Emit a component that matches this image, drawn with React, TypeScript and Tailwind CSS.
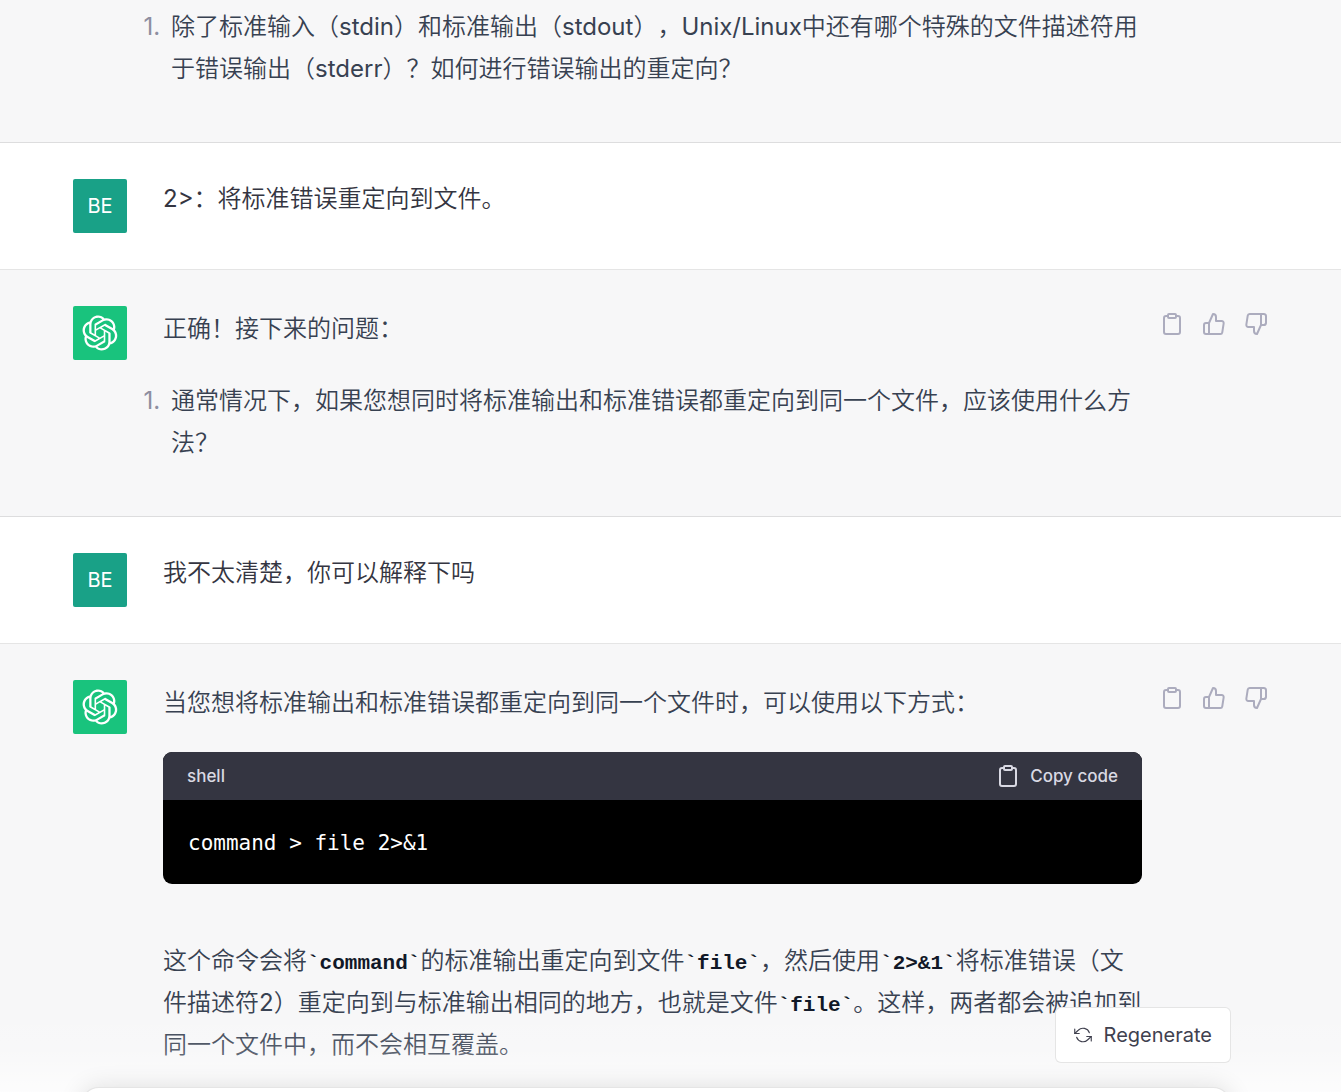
import React from 'react';
import { FiClipboard, FiRefreshCcw, FiThumbsDown, FiThumbsUp } from 'react-icons/fi';

const LOGO_PATH =
  'M37.5324 16.8707C37.9808 15.5241 38.1363 14.0974 37.9886 12.6859C37.8409 11.2744 37.3934 9.91076 36.676 8.68622C35.6126 6.83404 33.9882 5.3676 32.0373 4.4985C30.0864 3.62941 27.9098 3.40259 25.8215 3.85078C24.8796 2.7893 23.7219 1.94125 22.4257 1.36341C21.1295 0.785575 19.7249 0.491269 18.3058 0.500197C16.1708 0.495044 14.0893 1.16803 12.3614 2.42214C10.6335 3.67624 9.34853 5.44666 8.6917 7.47815C7.30085 7.76286 5.98686 8.3414 4.8377 9.17505C3.68854 10.0087 2.73073 11.0782 2.02839 12.312C0.956464 14.1591 0.498905 16.2988 0.721698 18.4228C0.944492 20.5467 1.83612 22.5449 3.268 24.1293C2.81966 25.4759 2.66413 26.9026 2.81182 28.3141C2.95951 29.7256 3.40701 31.0892 4.12437 32.3138C5.18791 34.1659 6.8123 35.6322 8.76321 36.5013C10.7141 37.3704 12.8907 37.5973 14.9789 37.1492C15.9208 38.2107 17.0786 39.0587 18.3747 39.6366C19.6709 40.2144 21.0755 40.5087 22.4946 40.4998C24.6307 40.5054 26.7133 39.8321 28.4418 38.5772C30.1704 37.3223 31.4556 35.5506 32.1119 33.5179C33.5027 33.2332 34.8167 32.6547 35.9659 31.821C37.115 30.9874 38.0728 29.9178 38.7752 28.684C39.8458 26.8371 40.3023 24.6979 40.0789 22.5748C39.8556 20.4517 38.9639 18.4544 37.5324 16.8707ZM22.4978 37.8849C20.7443 37.8874 19.0459 37.2733 17.6994 36.1501C17.7601 36.117 17.8666 36.0586 17.936 36.0161L25.9004 31.4156C26.1003 31.3019 26.2663 31.137 26.3813 30.9378C26.4964 30.7386 26.5563 30.5124 26.5549 30.2825V19.0542L29.9213 20.998C29.9389 21.0068 29.9541 21.0198 29.9656 21.0359C29.977 21.052 29.9842 21.0707 29.9867 21.0902V30.3889C29.9842 32.375 29.1946 34.2791 27.7909 35.6841C26.3872 37.0892 24.4838 37.8806 22.4978 37.8849ZM6.39227 31.0064C5.51397 29.4888 5.19742 27.7107 5.49804 25.9832C5.55718 26.0187 5.66048 26.0818 5.73461 26.1244L13.699 30.7248C13.8975 30.8408 14.1233 30.902 14.3532 30.902C14.583 30.902 14.8088 30.8408 15.0073 30.7248L24.731 25.1103V28.9979C24.7321 29.0177 24.7283 29.0376 24.7199 29.0556C24.7115 29.0736 24.6988 29.0893 24.6829 29.1012L16.6317 33.7497C14.9096 34.7416 12.8643 35.0097 10.9447 34.4954C9.02506 33.9811 7.38785 32.7263 6.39227 31.0064ZM4.29707 13.6194C5.17156 12.0998 6.55279 10.9364 8.19885 10.3327C8.19885 10.4013 8.19491 10.5228 8.19491 10.6071V19.808C8.19351 20.0378 8.25334 20.2638 8.36823 20.4629C8.48312 20.6619 8.64893 20.8267 8.84863 20.9404L18.5723 26.5542L15.206 28.4979C15.1894 28.5089 15.1703 28.5155 15.1505 28.5173C15.1307 28.5191 15.1107 28.516 15.0924 28.5082L7.04046 23.8557C5.32135 22.8601 4.06716 21.2235 3.55289 19.3046C3.03862 17.3858 3.30624 15.3413 4.29707 13.6194ZM31.955 20.0556L22.2312 14.4411L25.5976 12.4981C25.6142 12.4872 25.6333 12.4805 25.6531 12.4787C25.6729 12.4769 25.6928 12.4801 25.7111 12.4879L33.7631 17.1364C34.9967 17.849 36.0017 18.8982 36.6606 20.1613C37.3194 21.4244 37.6047 22.849 37.4832 24.2684C37.3617 25.6878 36.8382 27.0432 35.9743 28.1759C35.1103 29.3086 33.9415 30.1717 32.6047 30.6641C32.6047 30.5947 32.6047 30.4733 32.6047 30.3889V21.188C32.6066 20.9586 32.5474 20.7328 32.4332 20.5338C32.319 20.3348 32.154 20.1698 31.955 20.0556ZM35.3055 15.0128C35.2464 14.9765 35.1431 14.9142 35.069 14.8717L27.1045 10.2712C26.906 10.1554 26.6803 10.0943 26.4504 10.0943C26.2206 10.0943 25.9948 10.1554 25.7963 10.2712L16.0726 15.8858V11.9982C16.0715 11.9783 16.0753 11.9585 16.0837 11.9405C16.0921 11.9225 16.1048 11.9068 16.1207 11.8949L24.1719 7.25025C25.4053 6.53903 26.8158 6.19376 28.2383 6.25482C29.6608 6.31589 31.0364 6.78077 32.2044 7.59508C33.3723 8.40939 34.2842 9.53945 34.8334 10.8531C35.3826 12.1667 35.5464 13.6095 35.3055 15.0128ZM14.2424 21.9419L10.8752 19.9981C10.8576 19.9893 10.8423 19.9763 10.8309 19.9602C10.8195 19.9441 10.8122 19.9254 10.8098 19.9058V10.6071C10.8107 9.18295 11.2173 7.78848 11.9819 6.58696C12.7466 5.38544 13.8377 4.42659 15.1275 3.82264C16.4173 3.21869 17.8524 2.99464 19.2649 3.1767C20.6775 3.35876 22.0089 3.93941 23.1034 4.85067C23.0427 4.88379 22.937 4.94215 22.8668 4.98473L14.9024 9.58517C14.7025 9.69878 14.5366 9.86356 14.4215 10.0626C14.3065 10.2616 14.2466 10.4877 14.2479 10.7175L14.2424 21.9419ZM16.071 17.9991L20.4018 15.4978L24.7325 17.9975V22.9985L20.4018 25.4983L16.071 22.9985V17.9991Z';

function UserAvatar() {
  return (
    <div className="flex h-[54px] w-[54px] shrink-0 items-center justify-center rounded-xs bg-[#19a187] text-xl text-white">
      BE
    </div>
  );
}

function BotAvatar() {
  return (
    <div className="flex h-[54px] w-[54px] shrink-0 items-center justify-center rounded-xs bg-[#19c37d] text-white">
      <svg viewBox="0 0 41 41" className="h-9 w-9" fill="currentColor" role="img" aria-label="ChatGPT">
        <path d={LOGO_PATH} />
      </svg>
    </div>
  );
}

function MessageActions() {
  return (
    <div className="flex w-[108px] shrink-0 justify-between self-start pt-1.5 text-[#acacbe]">
      <button type="button" aria-label="Copy" className="h-6 w-6">
        <FiClipboard className="h-6 w-6" />
      </button>
      <button type="button" aria-label="Good response" className="h-6 w-6">
        <FiThumbsUp className="h-6 w-6" />
      </button>
      <button type="button" aria-label="Bad response" className="h-6 w-6">
        <FiThumbsDown className="h-6 w-6" />
      </button>
    </div>
  );
}

function UserMessage({ text }: { text: string }) {
  return (
    <div className="border-b border-black/10 bg-white px-[73px] py-9">
      <div className="flex gap-9">
        <UserAvatar />
        <p className="min-w-0 flex-1 leading-10 text-[#343541]">{text}</p>
      </div>
    </div>
  );
}

function BotMessage({ children }: { children: React.ReactNode }) {
  return (
    <div className="border-b border-black/10 bg-[#f7f7f8] px-[73px] py-9">
      <div className="flex">
        <BotAvatar />
        <div className="ml-9 mr-[18px] min-w-0 flex-1 pt-0.5 leading-[42px] text-[#374151]">{children}</div>
        <MessageActions />
      </div>
    </div>
  );
}

function Question({ children }: { children: React.ReactNode }) {
  return (
    <ol className="mb-4 list-decimal pl-1 leading-[42px] text-[#374151] marker:text-[#8e8ea0] marker:[font-variant-numeric:proportional-nums]">
      <li className="pl-1">{children}</li>
    </ol>
  );
}

function CodeBlock({ language, code }: { language: string; code: string }) {
  return (
    <div className="overflow-hidden rounded-[9px] bg-black">
      <div className="flex h-12 items-center justify-between bg-[#343541] px-6 text-[17px] font-medium text-[#d9d9e3]">
        <span>{language}</span>
        <button type="button" className="flex items-center gap-2.5">
          <FiClipboard className="h-6 w-6" />
          Copy code
        </button>
      </div>
      <pre className="px-[25px] pt-[22px] pb-5 text-[21px] leading-[42px] text-white">
        <code className="block font-['DejaVu_Sans_Mono',monospace]">{code}</code>
      </pre>
    </div>
  );
}

function InlineCode({ children }: { children: string }) {
  return (
    <code className="font-['Liberation_Mono',monospace] text-[21px] leading-none font-bold text-[#111827]">
      {'`' + children + '`'}
    </code>
  );
}

export default function App() {
  return (
    <div className="relative h-screen overflow-hidden bg-[#f7f7f8] font-['Inter','Noto_Sans_CJK_SC_DemiLight','Noto_Sans_CJK_SC',sans-serif] text-2xl [text-spacing-trim:space-all]">
      <main>
        {/* Tail of the previous answer */}
        <div className="border-b border-black/10 bg-[#f7f7f8] pb-9 pl-[163px] pr-[199px] pt-1.5">
          <Question>
            除了标准输入（stdin）和标准输出（stdout），Unix/Linux中还有哪个特殊的文件描述符用于错误输出（stderr）？如何进行错误输出的重定向？
          </Question>
        </div>

        <UserMessage text="2>：将标准错误重定向到文件。" />

        <BotMessage>
          <p className="mb-[30px]">正确！接下来的问题：</p>
          <Question>通常情况下，如果您想同时将标准输出和标准错误都重定向到同一个文件，应该使用什么方法？</Question>
        </BotMessage>

        <UserMessage text="我不太清楚，你可以解释下吗" />

        <BotMessage>
          <p className="mb-7">当您想将标准输出和标准错误都重定向到同一个文件时，可以使用以下方式：</p>
          <CodeBlock language="shell" code="command > file 2>&1" />
          <p className="mt-14">
            这个命令会将<InlineCode>command</InlineCode>的标准输出重定向到文件<InlineCode>file</InlineCode>，然后使用
            <InlineCode>{'2>&1'}</InlineCode>将标准错误（文件描述符2）重定向到与标准输出相同的地方，也就是文件
            <InlineCode>file</InlineCode>。这样，两者都会被追加到同一个文件中，而不会相互覆盖。
          </p>
        </BotMessage>
      </main>

      {/* Composer pinned over the conversation */}
      <footer className="absolute inset-x-0 bottom-0 h-[85px] overflow-hidden bg-linear-to-b from-white/0 via-white/15 via-50% to-white/70 pl-[81px] pr-[110px]">
        <div className="flex justify-end">
          <button
            type="button"
            className="flex h-14 items-center gap-3 rounded-md border border-black/10 bg-white px-[18px] text-[20px] text-[#40414f]"
          >
            <FiRefreshCcw className="h-[18px] w-[18px]" strokeWidth={1.5} />
            Regenerate
          </button>
        </div>
        <textarea
          aria-label="Message"
          className="mt-6 block h-20 w-full resize-none rounded-[18px] border border-black/10 bg-white shadow-[0_0_24px_rgba(0,0,0,0.12)]"
        />
      </footer>
    </div>
  );
}
